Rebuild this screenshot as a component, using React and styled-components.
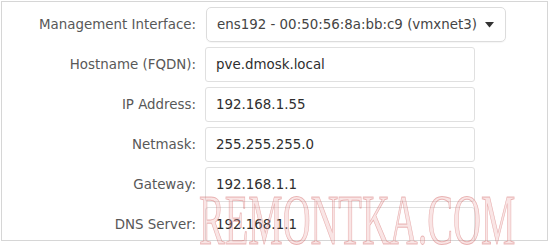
import styled, { createGlobalStyle } from 'styled-components';

const GlobalStyle = createGlobalStyle`
  html, body {
    margin: 0;
    padding: 0;
    background: #ffffff;
  }
  body {
    font-family: 'DejaVu Sans', 'Liberation Sans', sans-serif;
  }
`;

const fields = [
  { label: 'Hostname (FQDN):', value: 'pve.dmosk.local' },
  { label: 'IP Address:', value: '192.168.1.55' },
  { label: 'Netmask:', value: '255.255.255.0' },
  { label: 'Gateway:', value: '192.168.1.1' },
  { label: 'DNS Server:', value: '192.168.1.1' },
];

function App() {
  return (
    <>
      <GlobalStyle />
      <Page>
        <Frame>
          <Form>
            <Label>Management Interface:</Label>
            <Select>
              <span>ens192 - 00:50:56:8a:bb:c9 (vmxnet3)</span>
              <svg width='9' height='6' viewBox='0 0 9 6'>
                <path d='M0 0 L9 0 L4.5 5.5 Z' fill='#333' />
              </svg>
            </Select>
            {fields.map((f) => (
              <Row key={f.label}>
                <Label>{f.label}</Label>
                <Input>{f.value}</Input>
              </Row>
            ))}
          </Form>
        </Frame>
        <Watermark>REMONTKA.COM</Watermark>
      </Page>
    </>
  );
}

const Page = styled.div`
  position: relative;
  width: 550px;
  height: 246px;
  padding: 1px;
  box-sizing: border-box;
  overflow: hidden;
`;

const Frame = styled.div`
  width: 547px;
  height: 240px;
  border: 1px solid #d6d6d6;
  box-sizing: border-box;
  overflow: hidden;
  background: #fff;
`;

const Form = styled.div`
  display: grid;
  grid-template-columns: 194px 300px;
  grid-auto-rows: 35px;
  column-gap: 10px;
  row-gap: 5px;
  padding-top: 5px;
  font-size: 13.4px;
`;

const Row = styled.div`
  display: contents;
`;

const Label = styled.div`
  display: flex;
  align-items: center;
  justify-content: flex-end;
  white-space: nowrap;
  color: #585858;
`;

const Select = styled.div`
  display: flex;
  align-items: center;
  gap: 8px;
  padding: 0 4px 0 10px;
  border: 1px solid #dcdcdc;
  border-radius: 5px;
  white-space: nowrap;
  color: #444;
  box-shadow: 0 1px 1px rgba(0, 0, 0, 0.04);
`;

const Input = styled.div`
  display: flex;
  align-items: center;
  width: 270px;
  box-sizing: border-box;
  margin-left: -1px;
  padding: 0 10px;
  border: 1px solid #e0e0e0;
  border-radius: 3px;
  white-space: nowrap;
  color: #2e2e2e;
`;

const Watermark = styled.div`
  position: absolute;
  left: 199px;
  top: 184px;
  font-family: 'Liberation Serif', serif;
  font-size: 72px;
  line-height: 1;
  white-space: nowrap;
  color: rgba(235, 160, 160, 0.28);
  -webkit-text-stroke: 1px rgba(205, 85, 85, 0.4);
  transform: scaleX(0.536);
  transform-origin: left top;
  pointer-events: none;
`;

export default App;
